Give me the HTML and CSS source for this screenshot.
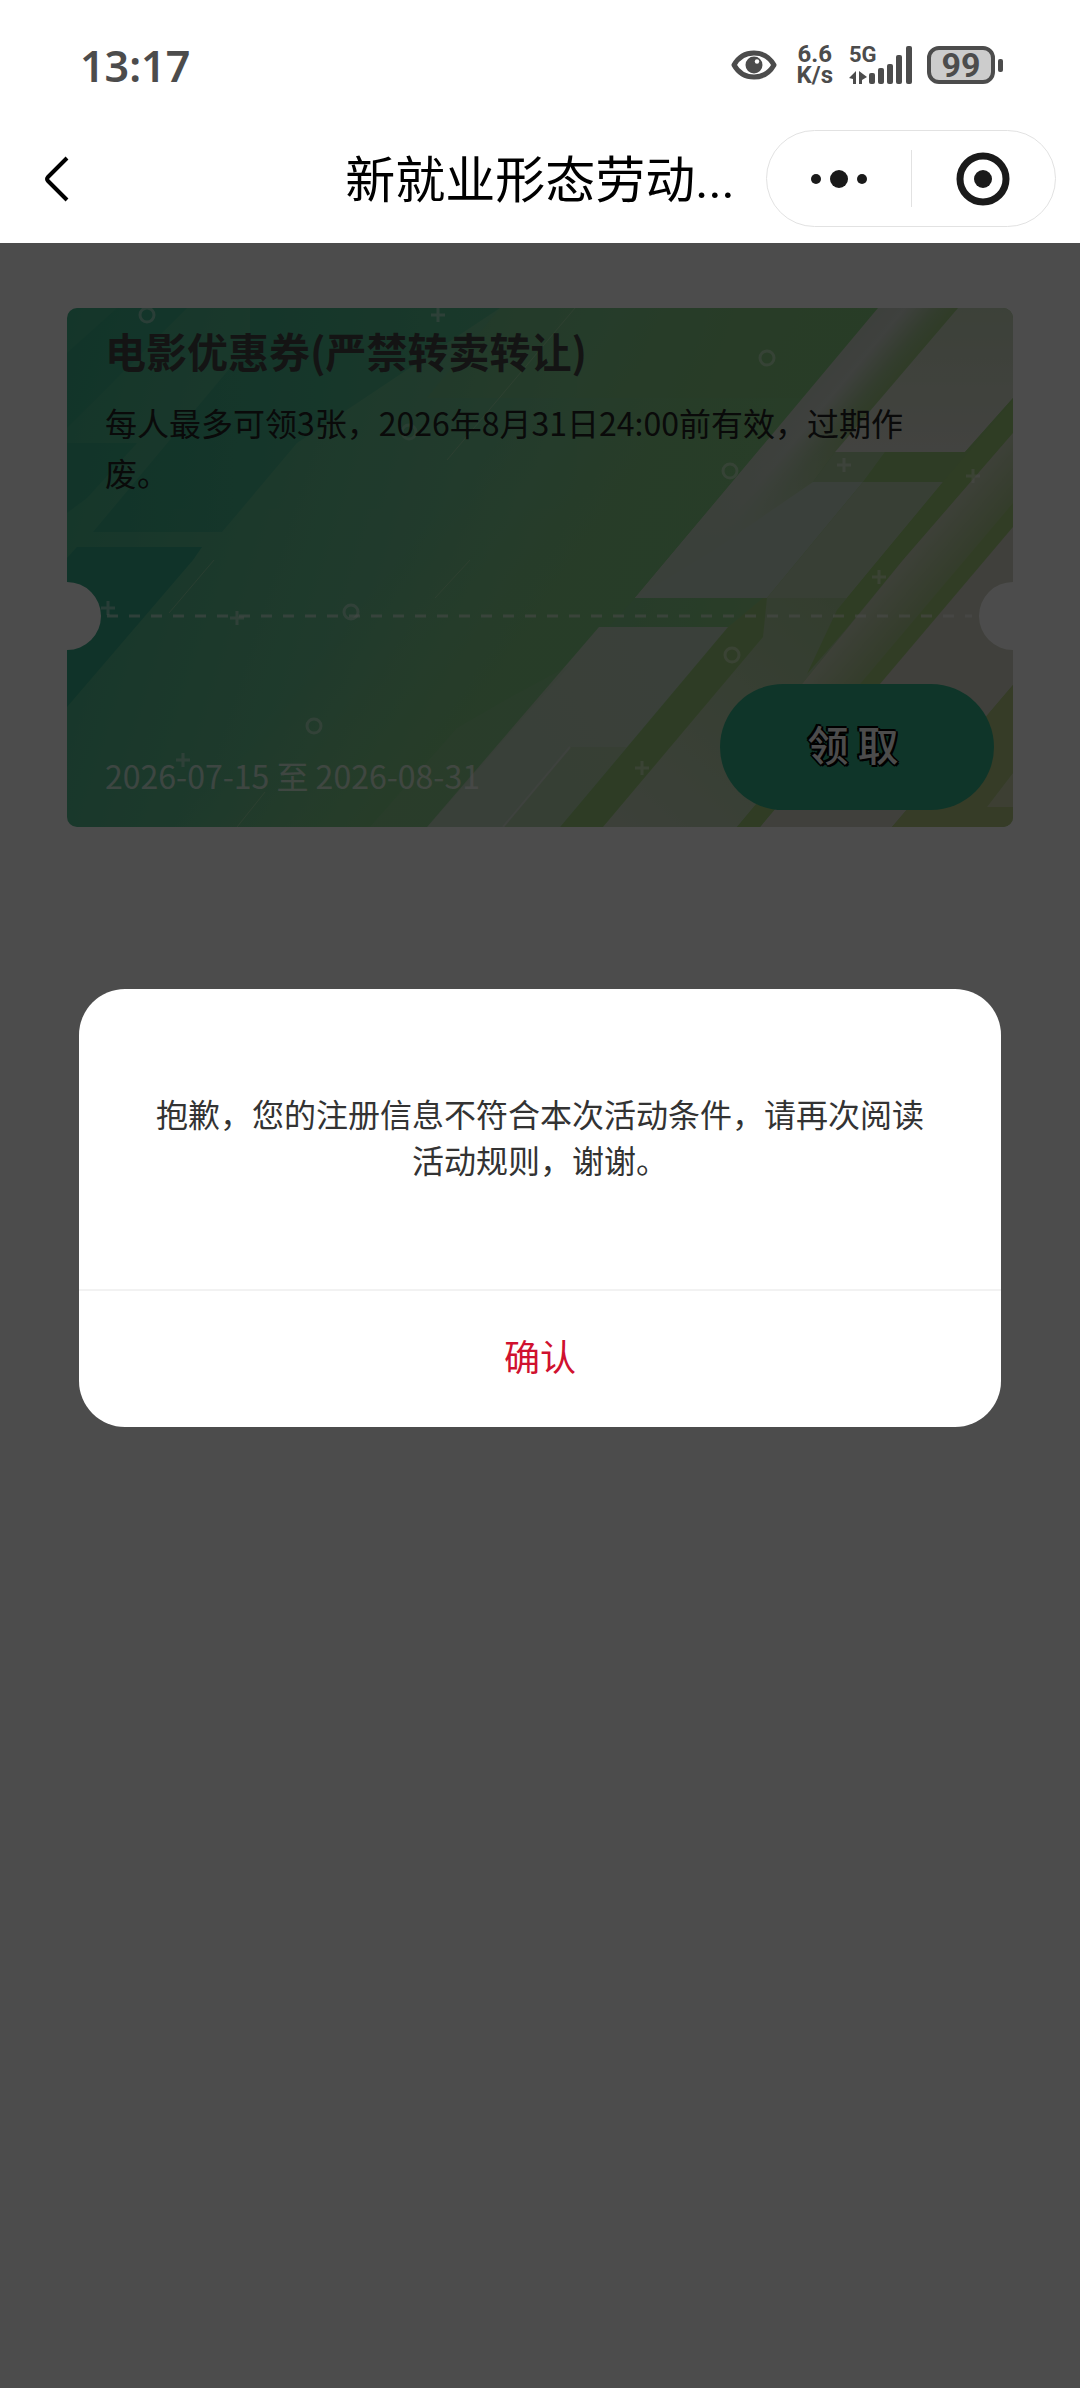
FILE: index.html
```
<!DOCTYPE html>
<html lang="zh-CN">
<head>
    <meta charset="UTF-8">
    <meta name="viewport" content="width=device-width, initial-scale=1.0">
    <title>新就业形态劳动...</title>
    <link rel="stylesheet" href="styles.css">
</head>
<body>
    <header class="header">
        <div class="status-bar">
            <span class="time">13:17</span>
            <div class="status-icons">
                <svg class="eye" viewBox="0 0 46 32" width="46" height="32">
                    <path d="M3 16C12 0 34 0 43 16C34 32 12 32 3 16Z" fill="none" stroke="#4c4c4c" stroke-width="5" stroke-linejoin="round"/>
                    <circle cx="23" cy="16" r="8.5" fill="#4c4c4c"/>
                    <circle cx="26" cy="12.5" r="2.2" fill="#fff"/>
                </svg>
                <div class="speed">6.6<br>K/s</div>
                <div class="network">
                    <span class="network-type">5G</span>
                    <svg class="signal" viewBox="0 0 64 38" width="64" height="38" fill="#4c4c4c">
                        <path d="M0 32L7 25V38H4V33ZM10 25L18 31L13 34V38H10Z"/>
                        <rect x="20" y="27" width="6" height="11" rx="2"/>
                        <rect x="29" y="22" width="6" height="16" rx="2"/>
                        <rect x="38" y="18" width="6" height="20" rx="2"/>
                        <rect x="47" y="9" width="6" height="29" rx="2"/>
                        <rect x="57" y="0" width="6" height="38" rx="2"/>
                    </svg>
                </div>
                <div class="battery"><span class="battery-level">99</span><span class="battery-tip"></span></div>
            </div>
        </div>
        <nav class="nav-bar">
            <button class="back" type="button" aria-label="返回">
                <svg viewBox="0 0 24 46" width="24" height="46">
                    <path d="M22 2L3 21Q1 23 3 25L22 44" fill="none" stroke="#000" stroke-width="4"/>
                </svg>
            </button>
            <h1 class="page-title">新就业形态劳动...</h1>
            <div class="capsule">
                <button class="capsule-button" type="button" aria-label="更多">
                    <svg viewBox="0 0 58 20" width="58" height="20" fill="#1a1a1a">
                        <circle cx="6" cy="10" r="5"/>
                        <circle cx="29" cy="10" r="9"/>
                        <circle cx="52" cy="10" r="5"/>
                    </svg>
                </button>
                <button class="capsule-button" type="button" aria-label="关闭">
                    <svg viewBox="0 0 54 54" width="54" height="54">
                        <circle cx="27" cy="27" r="23" fill="none" stroke="#1a1a1a" stroke-width="7"/>
                        <circle cx="27" cy="27" r="9" fill="#1a1a1a"/>
                    </svg>
                </button>
            </div>
        </nav>
    </header>

    <main class="content">
        <section class="coupon">
            <svg class="coupon-art" viewBox="0 0 946 519" preserveAspectRatio="none" aria-hidden="true">
                <defs>
                    <linearGradient id="base" x1="0" y1="0" x2="946" y2="300" gradientUnits="userSpaceOnUse">
                        <stop offset="0" stop-color="#44b48c"/>
                        <stop offset="0.25" stop-color="#60bf92"/>
                        <stop offset="0.5" stop-color="#7ac894"/>
                        <stop offset="0.7" stop-color="#88cb88"/>
                        <stop offset="1" stop-color="#a6d07f"/>
                    </linearGradient>
                    <linearGradient id="dark" x1="0" y1="0" x2="400" y2="0" gradientUnits="userSpaceOnUse">
                        <stop offset="0" stop-color="#36ab89"/>
                        <stop offset="1" stop-color="#52bb8d"/>
                    </linearGradient>
                    <linearGradient id="glow" x1="440" y1="120" x2="560" y2="221" gradientUnits="userSpaceOnUse">
                        <stop offset="0" stop-color="#84cb84" stop-opacity="0"/>
                        <stop offset="1" stop-color="#84cb84" stop-opacity="0.8"/>
                    </linearGradient>
                    <linearGradient id="shine" x1="700" y1="132" x2="748" y2="172" gradientUnits="userSpaceOnUse">
                        <stop offset="0" stop-color="#ccd6c8"/>
                        <stop offset="0.35" stop-color="#d2d9d0"/>
                        <stop offset="0.75" stop-color="#aacb98"/>
                        <stop offset="1" stop-color="#9fc982"/>
                    </linearGradient>
                    <linearGradient id="fade" x1="0" y1="110" x2="0" y2="230" gradientUnits="userSpaceOnUse">
                        <stop offset="0" stop-color="#c4d7c2" stop-opacity="0"/>
                        <stop offset="1" stop-color="#c4d7c2"/>
                    </linearGradient>
                    <linearGradient id="shine2" x1="780" y1="322" x2="812" y2="349" gradientUnits="userSpaceOnUse">
                        <stop offset="0" stop-color="#d8dcce"/>
                        <stop offset="1" stop-color="#b0cd94"/>
                    </linearGradient>
                    <linearGradient id="pale" x1="400" y1="519" x2="946" y2="150" gradientUnits="userSpaceOnUse">
                        <stop offset="0" stop-color="#bed5be"/>
                        <stop offset="0.5" stop-color="#c4d8c2"/>
                        <stop offset="1" stop-color="#d6dccb"/>
                    </linearGradient>
                    <linearGradient id="pale-top" x1="0" y1="0" x2="0" y2="144" gradientUnits="userSpaceOnUse">
                        <stop offset="0" stop-color="#cad9be"/>
                        <stop offset="1" stop-color="#dedfd6"/>
                    </linearGradient>
                    <linearGradient id="lower" x1="760" y1="290" x2="560" y2="519" gradientUnits="userSpaceOnUse">
                        <stop offset="0" stop-color="#acce9c"/>
                        <stop offset="1" stop-color="#c8d8bf"/>
                    </linearGradient>
                </defs>
                <rect width="946" height="519" fill="url(#base)"/>
                <path d="M183 0H433L230 135L155 224H26L183 36Z" fill="url(#dark)" opacity="0.8"/>
                <path d="M0 45L50 0H120L0 120Z" fill="#36ab89" opacity="0.5"/>
                <path d="M10 239H135L126 252L0 399V250Z" fill="#36ab89"/>
                <path d="M0 135H70L20 190L0 205Z" fill="#36ab89" opacity="0.6"/>
                <path d="M460 0H811L568 290L360 519H30L240 280Z" fill="url(#glow)"/>
                <path d="M433 0H811L735 90H360Z" fill="#8cca78" opacity="0.2"/>
                <path d="M147 252L102 305M403 252L368 290M198 484L170 519M508 0L380 152" stroke="#b9e0b4" stroke-width="1" opacity="0.5"/>

                <path d="M811 0H891L768 144L746 174L650 290H568Z" fill="url(#shine)"/>
                <path d="M719 110H797L768 144L746 174L650 290H568Z" fill="url(#fade)"/>
                <path d="M891 0H946V90L898 144H768Z" fill="url(#pale-top)"/>
                <path d="M768 144H818L796 174H746Z" fill="#accb9e"/>
                <path d="M818 144H898L946 90V125L836 252L735 376L620 519H493L660 320L696 290L796 174Z" fill="#9cca7c"/>
                <path d="M746 174H796L700 290H568L650 240Z" fill="#c4d8c6"/>
                <path d="M796 174H876L780 290H700Z" fill="#bcd4b2"/>
                <path d="M700 290H780L836 252L735 376H790L670 519H536L696 329Z" fill="url(#lower)"/>
                <path d="M532 319H661L493 519H360Z" fill="url(#pale)"/>
                <path d="M440 391L503 357L360 519H303L390 420Z" fill="#a8cda4" opacity="0.2"/>
                <path d="M503 439L436 519H493L560 439Z" fill="#a8d094" opacity="0.4"/>
                <path d="M503 439L436 519" stroke="#d0dcd0" stroke-width="2"/>
                <path d="M803 262L876 174L946 92V125L836 252L780 320L740 366L770 302Z" fill="#9ecb78"/>
                <path d="M946 125V219L813 376H735L836 252Z" fill="#b0cb90"/>
                <path d="M836 252L735 376H795L896 252L946 190V125Z" fill="url(#shine2)" opacity="0.7"/>
                <path d="M946 195V219L813 376H793Z" fill="#a6cb7e"/>
                <path d="M946 219V377L825 519H693L813 376Z" fill="#d6d8c8"/>
                <path d="M790 376H813L693 519H670Z" fill="#a0c97a"/>
                <path d="M946 377V465L920 499H946V519H825Z" fill="#b4c884"/>
                <path d="M946 465V499H920Z" fill="#ccd4ac"/>

                <g fill="none" stroke="#fff" stroke-opacity="0.4" stroke-width="3">
                    <circle cx="80" cy="7" r="7"/>
                    <circle cx="342" cy="124" r="7" stroke-opacity="0.25"/>
                    <circle cx="700" cy="50" r="7"/>
                    <circle cx="663" cy="163" r="7"/>
                    <circle cx="284" cy="304" r="7"/>
                    <circle cx="247" cy="418" r="7"/>
                    <circle cx="665" cy="347" r="7"/>
                    <path d="M364 7H378M371 0V14M770 157H784M777 150V164M899 168H913M906 161V175M34 300H48M41 293V307M163 310H177M170 303V317M109 452H123M116 445V459M805 269H819M812 262V276M568 460H582M575 453V467"/>
                </g>
                <path d="M40 308H905" stroke="#fff" stroke-opacity="0.5" stroke-width="3" stroke-dasharray="11 11"/>
                <circle cx="0" cy="308" r="34" fill="#fff"/>
                <circle cx="946" cy="308" r="34" fill="#fff"/>
            </svg>
            <h2 class="coupon-title">电影优惠券(严禁转卖转让)</h2>
            <p class="coupon-desc">每人最多可领3张，2026年8月31日24:00前有效，过期作废。</p>
            <div class="coupon-footer">
                <span class="coupon-date">2026-07-15 至 2026-08-31</span>
                <button class="receive" type="button">领 取</button>
            </div>
        </section>

        <div class="mask">
            <div class="dialog" role="alertdialog" aria-describedby="message">
                <p class="dialog-message" id="message">抱歉，您的注册信息不符合本次活动条件，请再次阅读活动规则，谢谢。</p>
                <button class="dialog-confirm" type="button">确认</button>
            </div>
        </div>
    </main>
</body>
</html>
```
FILE: styles.css
```
* {
    box-sizing: border-box;
}
body {
    margin: 0;
    min-height: 100vh;
    display: flex;
    flex-direction: column;
    font-family: "Noto Sans CJK SC", sans-serif;
    background: #fff;
}
h1, h2, p {
    margin: 0;
}
button {
    padding: 0;
    border: none;
    background: none;
    font-family: inherit;
    cursor: pointer;
}
svg {
    display: block;
}

/* status bar */
.status-bar {
    display: flex;
    justify-content: space-between;
    align-items: center;
    height: 114px;
    padding: 16px 77px 0 80px;
    color: #4c4c4c;
}
.time {
    font-family: "Noto Sans", sans-serif;
    font-size: 43px;
    font-weight: 600;
}
.status-icons {
    display: flex;
    align-items: center;
    font-family: Roboto, sans-serif;
    font-weight: 700;
}
.speed {
    margin-left: 20px;
    font-size: 24px;
    line-height: 21px;
    text-align: center;
}
.network {
    position: relative;
    margin-left: 16px;
}
.network-type {
    position: absolute;
    top: 0;
    left: 0;
    font-size: 22px;
    line-height: 18px;
}
.battery {
    display: flex;
    align-items: center;
    gap: 3px;
    margin-left: 14px;
}
.battery-level {
    width: 68px;
    height: 38px;
    border: 4px solid #4c4c4c;
    border-radius: 12px;
    background: #ccc;
    font-size: 34px;
    line-height: 30px;
    text-align: center;
}
.battery-tip {
    width: 5px;
    height: 13px;
    border-radius: 2px;
    background: #4c4c4c;
}

/* navigation bar */
.nav-bar {
    display: grid;
    grid-template-columns: 1fr auto 1fr;
    align-items: center;
    height: 129px;
    padding: 0 24px;
}
.back {
    justify-self: start;
    margin-left: 21px;
}
.page-title {
    padding-top: 4px;
    font-family: Roboto, "Noto Sans CJK SC", sans-serif;
    font-size: 50px;
    font-weight: 400;
    line-height: 60px;
    white-space: nowrap;
}
.capsule {
    justify-self: end;
    display: flex;
    align-items: center;
    width: 290px;
    height: 97px;
    border: 1px solid #e2e2e2;
    border-radius: 49px;
}
.capsule-button {
    flex: 1;
    display: flex;
    align-items: center;
    justify-content: center;
    height: 57px;
}
.capsule-button + .capsule-button {
    border-left: 1px solid #e2e2e2;
}

/* coupon */
.content {
    position: relative;
    flex: 1;
    padding: 65px 67px;
}
.coupon {
    position: relative;
    display: flex;
    flex-direction: column;
    min-height: 519px;
    padding: 12px 19px 17px 38px;
    border-radius: 10px;
    overflow: hidden;
    color: #222;
}
.coupon-art {
    position: absolute;
    top: 0;
    left: 0;
    width: 100%;
    height: 100%;
}
.coupon-title,
.coupon-desc,
.coupon-footer {
    position: relative;
}
.coupon-title {
    font-size: 41px;
    font-weight: 700;
    line-height: 60px;
    color: #444;
}
.coupon-desc {
    margin-top: 17px;
    padding-right: 40px;
    font-size: 32px;
    line-height: 50px;
}
.coupon-footer {
    display: flex;
    justify-content: space-between;
    align-items: flex-end;
    margin-top: auto;
}
.coupon-date {
    padding-bottom: 12px;
    font-size: 32px;
    line-height: 46px;
    color: rgba(255, 255, 255, 0.7);
}
.receive {
    width: 274px;
    height: 126px;
    padding: 0 8px 8px 0;
    border-radius: 63px;
    background: #35b189;
    color: #fff;
    font-size: 41px;
    font-weight: 500;
    text-shadow: 2px 0 #000, -2px 0 #000, 0 2px #000, 0 -2px #000, 2px 2px #000, -2px -2px #000;
}

/* dialog */
.mask {
    position: absolute;
    top: 0;
    right: 0;
    bottom: 0;
    left: 0;
    padding: 746px 79px 0;
    background: rgba(0, 0, 0, 0.7);
}
.dialog {
    border-radius: 46px;
    background: #fff;
    overflow: hidden;
}
.dialog-message {
    padding: 101px 70px 107px;
    font-size: 32px;
    line-height: 46px;
    text-align: center;
    color: #333;
}
.dialog-confirm {
    display: block;
    width: 100%;
    height: 138px;
    padding-bottom: 8px;
    border-top: 2px solid #f2f2f2;
    font-size: 36px;
    color: #d0112f;
}
```
